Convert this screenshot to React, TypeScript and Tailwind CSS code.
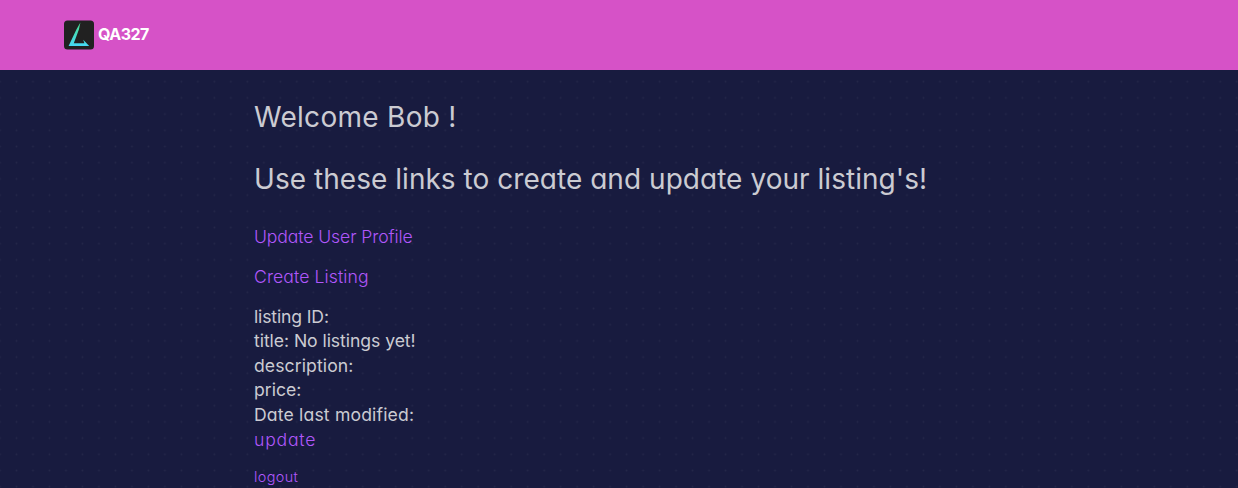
const bodyText = "h-[24.6px] text-[17.6px] leading-[24.6px] whitespace-nowrap";

function Dots() {
  return (
    <svg className="absolute inset-0 h-full w-full" aria-hidden="true">
      <defs>
        <pattern id="dots" x="-8.25" y="3.6" width="16.49" height="16.2" patternUnits="userSpaceOnUse">
          <circle cx="8.25" cy="8.1" r="0.9" fill="#ffffff" fillOpacity="0.055" />
        </pattern>
      </defs>
      <rect width="100%" height="100%" fill="url(#dots)" />
    </svg>
  );
}

function Logo() {
  return (
    <svg className="h-[30px] w-[30px]" viewBox="0 0 30 30" aria-hidden="true">
      <defs>
        <linearGradient id="blade" x1="0" y1="0" x2="0" y2="1">
          <stop offset="0" stopColor="#49df8e" />
          <stop offset="1" stopColor="#45d9f5" />
        </linearGradient>
      </defs>
      <rect y="0.5" width="30" height="29" rx="3.5" fill="#212121" />
      <path d="M16.4 2.4 12.4 9.5 4.6 26H25.2l-6-6.2 1.2 3.4H9.8L14.9 9.5Z" fill="url(#blade)" />
    </svg>
  );
}

export default function App() {
  return (
    <div className="flex h-[488px] w-full flex-col overflow-hidden bg-[#181b3f] font-['Inter',sans-serif] text-[#cbcbd2] [font-feature-settings:'cv11']">
      <header className="flex h-[70px] shrink-0 items-center bg-[#d652c7] pl-16">
        <a href="#" className="flex items-center gap-1 text-base font-bold text-white">
          <Logo />
          <span className="-mt-0.5 tracking-[-0.5px]">QA327</span>
        </a>
      </header>
      <main className="relative flex-1">
        <Dots />
        <div className="relative flex flex-col items-start pl-[254px] pt-[29px]">
          <h1 className="h-9 text-[28px] leading-9 tracking-[0.28px] whitespace-nowrap">Welcome Bob !</h1>
          <h2 className="mt-[26px] h-9 text-[28px] leading-9 tracking-[0.04px] whitespace-nowrap">Use these links to create and update your listing's!</h2>
          <a href="#" className={`mt-[28.4px] font-[350] tracking-[-0.1px] text-[#b057fb] ${bodyText}`}>Update User Profile</a>
          <a href="#" className={`mt-[14.6px] font-[350] tracking-[0.1px] text-[#b057fb] ${bodyText}`}>Create Listing</a>
          <div className="mt-[15.4px] flex flex-col items-start">
            <p className={`tracking-[-0.15px] ${bodyText}`}>listing ID:</p>
            <p className={`tracking-[-0.06px] ${bodyText}`}>title: No listings yet!</p>
            <p className={`tracking-[0.09px] ${bodyText}`}>description:</p>
            <p className={bodyText}>price:</p>
            <p className={`tracking-[0.16px] ${bodyText}`}>Date last modified:</p>
            <a href="#" className={`font-[350] tracking-[0.8px] text-[#b057fb] ${bodyText}`}>update</a>
          </div>
          <a href="#" className="mt-[14.2px] font-[350] text-[14.4px] leading-[22px] tracking-[0.4px] text-[#b057fb]">logout</a>
        </div>
      </main>
    </div>
  );
}
